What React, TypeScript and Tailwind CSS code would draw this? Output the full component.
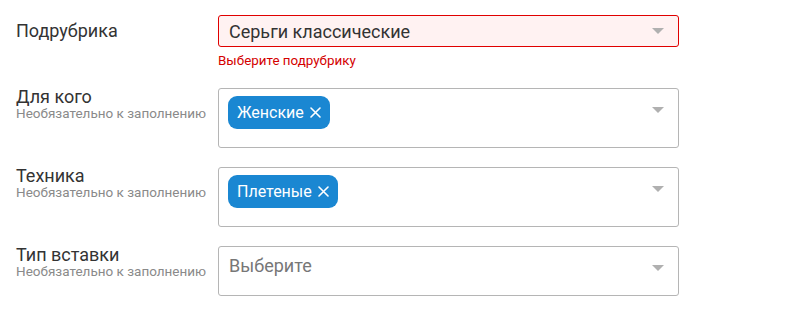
type Row = {
  label: string
  optional?: boolean
  chips?: string[]
  value?: string
  placeholder?: string
  error?: string
}

const rows: Row[] = [
  { label: 'Подрубрика', value: 'Серьги классические', error: 'Выберите подрубрику' },
  { label: 'Для кого', optional: true, chips: ['Женские'] },
  { label: 'Техника', optional: true, chips: ['Плетеные'] },
  { label: 'Тип вставки', optional: true, placeholder: 'Выберите' },
]

function Arrow({ className = '' }: { className?: string }) {
  return (
    <svg width="12" height="6" viewBox="0 0 12 6" className={`shrink-0 ${className}`}>
      <path d="M0 0h12L6 6z" fill="#b0b0b0" />
    </svg>
  )
}

function Cross() {
  return (
    <svg width="11" height="11" viewBox="0 0 11 11" className="shrink-0">
      <path d="M1 1l9 9M10 1l-9 9" stroke="white" strokeWidth="1.6" strokeLinecap="round" />
    </svg>
  )
}

export default function App() {
  return (
    <div className="bg-white w-[794px] h-[312px] pt-[15px] pl-4" style={{ fontFamily: 'Roboto, sans-serif' }}>
      {rows.map((row) => (
        <div key={row.label} className="flex mb-[19px]">
          <div className="w-[202px] shrink-0">
            <div className={`text-[18px] text-[#333] ${row.optional ? 'leading-[18px]' : 'leading-[32px]'}`}>
              {row.label}
            </div>
            {row.optional && (
              <div className="text-[13.5px] leading-[15px] text-[#8a8a8a]">Необязательно к заполнению</div>
            )}
          </div>
          <div className="w-[461px]">
            {row.error ? (
              <div className="flex items-center justify-between h-8 rounded-[3px] border border-[#e00000] bg-[#fff2f2] pl-[10px] pr-[14px]">
                <span className="text-[18px] text-[#333]">{row.value}</span>
                <Arrow />
              </div>
            ) : row.chips ? (
              <div className="flex items-start justify-between h-[60px] rounded-[3px] border border-[#b5b5b5] pl-[9px] pr-[14px] pt-[7px]">
                <div className="flex gap-2">
                  {row.chips.map((c) => (
                    <span
                      key={c}
                      className="flex items-center gap-[6px] h-[33px] rounded-[9px] bg-[#1a87d2] pl-[9px] pr-[9px] text-[16px] text-white"
                    >
                      {c}
                      <Cross />
                    </span>
                  ))}
                </div>
                <Arrow className="mt-[11px]" />
              </div>
            ) : (
              <div className="flex items-start justify-between h-[50px] rounded-[3px] border border-[#b5b5b5] pl-[10px] pr-[14px] pt-[8px]">
                <span className="text-[18px] leading-[21px] text-[#777]">{row.placeholder}</span>
                <Arrow className="mt-[10px]" />
              </div>
            )}
            {row.error && <div className="text-[13.4px] leading-[17px] mt-[5px] text-[#d40000]">{row.error}</div>}
          </div>
        </div>
      ))}
    </div>
  )
}
